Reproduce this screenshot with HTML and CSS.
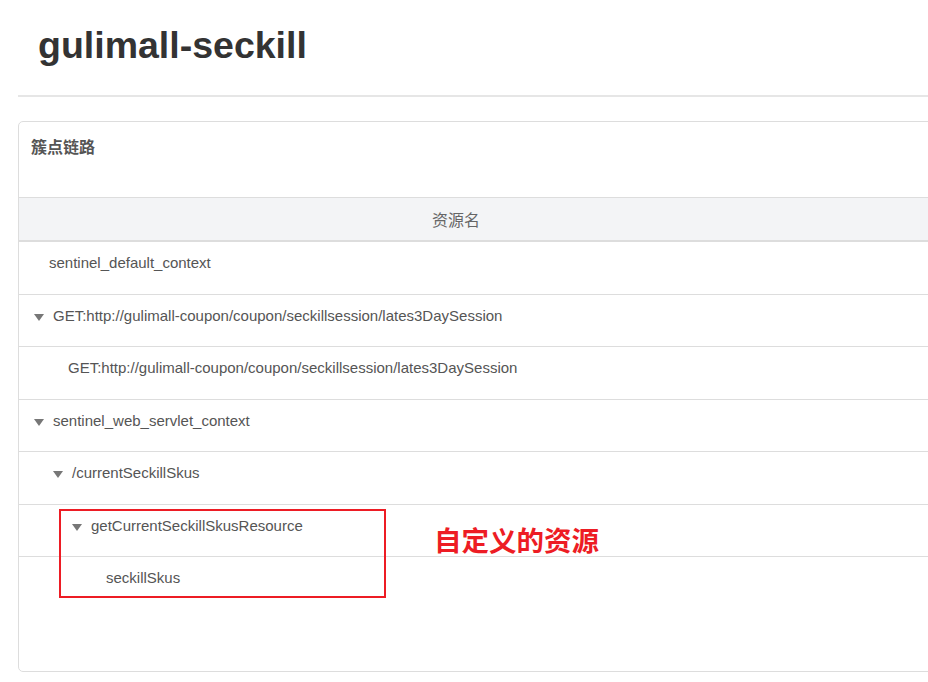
FILE: index.html
```html
<!DOCTYPE html>
<html lang="zh-CN">
<head>
<meta charset="utf-8">
<title>gulimall-seckill</title>
<link rel="stylesheet" href="styles.css">
</head>
<body>
<div class="page">
  <header class="app-head">
    <h1 class="app-title">gulimall-seckill</h1>
  </header>
  <hr class="divider">
  <section class="card">
    <div class="card-head">簇点链路</div>
    <div class="tree-table">
      <div class="thead">
        <div class="th th-name">资源名</div>
        <div class="th th-rest"></div>
      </div>
      <div class="tbody">
        <div class="tr"><div class="td"><span class="indent" style="width:0px"></span><span class="leaf"></span>sentinel_default_context</div></div>
        <div class="tr"><div class="td"><span class="indent" style="width:0px"></span><span class="caret"></span>GET:http://gulimall-coupon/coupon/seckillsession/lates3DaySession</div></div>
        <div class="tr"><div class="td"><span class="indent" style="width:19px"></span><span class="leaf"></span>GET:http://gulimall-coupon/coupon/seckillsession/lates3DaySession</div></div>
        <div class="tr"><div class="td"><span class="indent" style="width:0px"></span><span class="caret"></span>sentinel_web_servlet_context</div></div>
        <div class="tr"><div class="td"><span class="indent" style="width:19px"></span><span class="caret"></span>/currentSeckillSkus</div></div>
        <div class="tr"><div class="td"><span class="indent" style="width:38px"></span><span class="caret"></span>getCurrentSeckillSkusResource</div></div>
        <div class="tr tr-last"><div class="td"><span class="indent" style="width:57px"></span><span class="leaf"></span>seckillSkus</div></div>
      </div>
    </div>
    <div class="highlight-box"></div>
    <div class="annotation">自定义的资源</div>
  </section>
</div>
</body>
</html>
```

FILE: styles.css
```css
html, body {
  margin: 0;
  padding: 0;
  overflow: hidden;
  background: #fff;
}

body {
  font-family: "Liberation Sans", Arial, "Noto Sans CJK SC", sans-serif;
  color: #555;
}

.page {
  width: 1200px;
}

.app-head {
  padding: 0 0 0 38px;
  height: 95px;
}

.app-title {
  margin: 0;
  padding-top: 23px;
  font-size: 37.5px;
  line-height: 44px;
  font-weight: bold;
  color: #333;
}

.divider {
  margin: 0 0 0 18px;
  border: 0;
  border-top: 2px solid #e6e6e6;
  height: 0;
}

.card {
  position: relative;
  margin: 24px 0 0 18px;
  width: 1100px;
  height: 551px;
  border: 1px solid #ddd;
  border-radius: 5px;
  box-sizing: border-box;
}

.card-head {
  padding: 14px 12px 0 12px;
  height: 61px;
  font-family: "Noto Sans CJK SC", "Liberation Sans", sans-serif;
  font-size: 16px;
  line-height: 20px;
  font-weight: bold;
  color: #555;
}

.tree-table {
  display: flex;
  flex-direction: column;
}

.thead {
  display: grid;
  grid-template-columns: 874px 1fr;
  background: #f3f4f6;
  border-top: 1px solid #ddd;
  border-bottom: 2px solid #ddd;
  height: 42px;
  box-sizing: content-box;
}

.th {
  font-family: "Noto Sans CJK SC", "Liberation Sans", sans-serif;
  font-size: 16px;
  line-height: 43px;
  color: #666;
  text-align: center;
}

.tr {
  height: 52.5px;
  box-sizing: border-box;
  border-bottom: 1px solid #ddd;
}

.tr-last {
  border-bottom: 0;
}

.td {
  display: flex;
  align-items: center;
  padding: 11px 0 0 15px;
  font-size: 15px;
  line-height: 20px;
  color: #555;
  white-space: nowrap;
}

.indent {
  display: inline-block;
  flex: none;
}

.leaf {
  display: inline-block;
  flex: none;
  width: 15px;
}

.caret {
  display: inline-block;
  flex: none;
  width: 0;
  height: 0;
  margin: 3px 9px 0 0;
  border-left: 5px solid transparent;
  border-right: 5px solid transparent;
  border-top: 7px solid #777;
}

.highlight-box {
  position: absolute;
  left: 40px;
  top: 387px;
  width: 327px;
  height: 89px;
  border: 2px solid #ed1c24;
  box-sizing: border-box;
}

.annotation {
  position: absolute;
  left: 415px;
  top: 397px;
  font-family: "Noto Sans CJK SC", sans-serif;
  font-size: 27.5px;
  line-height: 40px;
  font-weight: bold;
  color: #ed1c24;
}
```
